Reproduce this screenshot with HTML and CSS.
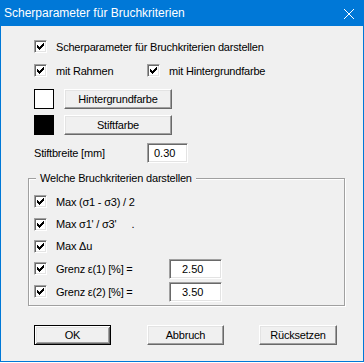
FILE: index.html
```html
<!DOCTYPE html>
<html>
<head>
<meta charset="utf-8">
<link rel="stylesheet" href="styles.css">
</head>
<body>
<div class="window">
  <div class="titlebar">
    <span class="title">Scherparameter für Bruchkriterien</span>
    <svg class="close" width="10" height="10" viewBox="0 0 10 10"><path d="M0 0L10 10M10 0L0 10" stroke="#fff" stroke-width="1"/></svg>
  </div>
  <div class="content">
    <div class="row r1">
      <span class="cb"><svg width="11" height="11" viewBox="0 0 11 11"><path d="M2 4h1v3H2zM3 5h1v3H3zM4 6h1v3H4zM5 5h1v3H5zM6 4h1v3H6zM7 3h1v3H7zM8 2h1v3H8z" fill="#000"/></svg></span>
      <span>Scherparameter für Bruchkriterien darstellen</span>
    </div>
    <div class="row r2">
      <div class="item first">
        <span class="cb"><svg width="11" height="11" viewBox="0 0 11 11"><path d="M2 4h1v3H2zM3 5h1v3H3zM4 6h1v3H4zM5 5h1v3H5zM6 4h1v3H6zM7 3h1v3H7zM8 2h1v3H8z" fill="#000"/></svg></span>
        <span>mit Rahmen</span>
      </div>
      <div class="item">
        <span class="cb"><svg width="11" height="11" viewBox="0 0 11 11"><path d="M2 4h1v3H2zM3 5h1v3H3zM4 6h1v3H4zM5 5h1v3H5zM6 4h1v3H6zM7 3h1v3H7zM8 2h1v3H8z" fill="#000"/></svg></span>
        <span>mit Hintergrundfarbe</span>
      </div>
    </div>
    <div class="row r3">
      <span class="swatch sw-white"></span>
      <span class="btn b-wide">Hintergrundfarbe</span>
    </div>
    <div class="row r4">
      <span class="swatch sw-black"></span>
      <span class="btn b-wide">Stiftfarbe</span>
    </div>
    <div class="row r5">
      <span class="lbl-stift">Stiftbreite [mm]</span>
      <span class="field f-stift">0.30</span>
    </div>

    <div class="group">
      <span class="legend">Welche Bruchkriterien darstellen</span>
      <div class="grow g1">
        <span class="cb"><svg width="11" height="11" viewBox="0 0 11 11"><path d="M2 4h1v3H2zM3 5h1v3H3zM4 6h1v3H4zM5 5h1v3H5zM6 4h1v3H6zM7 3h1v3H7zM8 2h1v3H8z" fill="#000"/></svg></span>
        <span>Max (σ1 - σ3) / 2</span>
      </div>
      <div class="grow g2">
        <span class="cb"><svg width="11" height="11" viewBox="0 0 11 11"><path d="M2 4h1v3H2zM3 5h1v3H3zM4 6h1v3H4zM5 5h1v3H5zM6 4h1v3H6zM7 3h1v3H7zM8 2h1v3H8z" fill="#000"/></svg></span>
        <span>Max σ1' / σ3'</span><span class="dot">.</span>
      </div>
      <div class="grow g3">
        <span class="cb"><svg width="11" height="11" viewBox="0 0 11 11"><path d="M2 4h1v3H2zM3 5h1v3H3zM4 6h1v3H4zM5 5h1v3H5zM6 4h1v3H6zM7 3h1v3H7zM8 2h1v3H8z" fill="#000"/></svg></span>
        <span>Max Δu</span>
      </div>
      <div class="grow g4">
        <span class="cb"><svg width="11" height="11" viewBox="0 0 11 11"><path d="M2 4h1v3H2zM3 5h1v3H3zM4 6h1v3H4zM5 5h1v3H5zM6 4h1v3H6zM7 3h1v3H7zM8 2h1v3H8z" fill="#000"/></svg></span>
        <span class="glbl">Grenz ε(1) [%] =</span>
        <span class="field f-grenz">2.50</span>
      </div>
      <div class="grow g5">
        <span class="cb"><svg width="11" height="11" viewBox="0 0 11 11"><path d="M2 4h1v3H2zM3 5h1v3H3zM4 6h1v3H4zM5 5h1v3H5zM6 4h1v3H6zM7 3h1v3H7zM8 2h1v3H8z" fill="#000"/></svg></span>
        <span class="glbl">Grenz ε(2) [%] =</span>
        <span class="field f-grenz">3.50</span>
      </div>
    </div>

    <div class="row buttons">
      <span class="btn b-ok">OK</span>
      <span class="btn b-abb">Abbruch</span>
      <span class="btn b-rs">Rücksetzen</span>
    </div>
  </div>
</div>
</body>
</html>
```

FILE: styles.css
```css
* { box-sizing: border-box; }

body {
  margin: 0;
  background: #ffffff;
  font-family: "Liberation Sans", Arial, sans-serif;
}

.window {
  width: 364px;
}

.titlebar {
  height: 26px;
  background: #0078d7;
  color: #ffffff;
  display: flex;
  align-items: center;
  padding-left: 4px;
  font-size: 12px;
}

.close {
  margin-left: auto;
  margin-right: 10px;
  align-self: flex-start;
  margin-top: 9px;
}

.content {
  height: 336px;
  background: #f0f0f0;
  border: 1px solid #0078d7;
  border-top: 0;
  padding-left: 27px;
  font-size: 11px;
  letter-spacing: -0.2px;
  color: #000000;
  display: flex;
  flex-direction: column;
  align-items: flex-start;
}

.row {
  display: flex;
  align-items: center;
  padding-left: 6px;
}

.r1 { margin-top: 14px; height: 13px; }
.r2 { margin-top: 11px; height: 13px; }
.r3 { margin-top: 12px; height: 20px; }
.r4 { margin-top: 6px; height: 20px; }
.r5 { margin-top: 8px; height: 20px; }

.item {
  display: flex;
  align-items: center;
}

.item.first { width: 113px; }

.cb {
  width: 13px;
  height: 13px;
  flex: none;
  background: #ffffff;
  border: 1px solid;
  border-color: #a0a0a0 #ffffff #ffffff #a0a0a0;
  box-shadow: inset 1px 1px 0 #696969, inset -1px -1px 0 #e3e3e3;
  margin-right: 9px;
  display: flex;
}

.cb svg { display: block; }

.swatch {
  width: 20px;
  height: 20px;
  margin-right: 10px;
  border: 1px solid #000000;
}

.sw-white { background: #ffffff; }
.sw-black { background: #000000; }

.btn {
  height: 20px;
  display: flex;
  align-items: center;
  justify-content: center;
  background: #f0f0f0;
  border: 1px solid;
  border-color: #ffffff #696969 #696969 #ffffff;
  box-shadow: inset -1px -1px 0 #a0a0a0, inset 1px 1px 0 #e3e3e3;
  padding-bottom: 1px;
}

.b-wide { width: 108px; }

.lbl-stift { width: 113px; }

.field {
  height: 20px;
  background: #ffffff;
  border: 1px solid;
  border-color: #a0a0a0 #ffffff #ffffff #a0a0a0;
  box-shadow: inset 1px 1px 0 #696969, inset -1px -1px 0 #e3e3e3;
  display: flex;
  align-items: center;
  letter-spacing: 0;
}

.f-stift { width: 41px; padding-left: 6px; }
.f-grenz { width: 53px; padding-left: 12px; }

.group {
  position: relative;
  margin-top: 15px;
  width: 317px;
  height: 128px;
  border: 1px solid #a0a0a0;
  box-shadow: inset 1px 1px 0 #ffffff, 1px 1px 0 #ffffff;
  padding-top: 11px;
}

.legend {
  position: absolute;
  top: -8px;
  left: 7px;
  line-height: 14px;
  padding: 0 4px 0 4px;
  background: #f0f0f0;
}

.grow {
  display: flex;
  align-items: center;
  padding-left: 5px;
}

.g1 { height: 23px; }
.g2 { height: 22px; }
.g3 { height: 22px; }
.g4 { height: 23px; }
.g5 { height: 23px; }

.glbl { width: 113px; }

.dot { margin-left: 15px; }

.buttons {
  margin-top: 19px;
  height: 20px;
}

.b-ok {
  width: 77px;
  border: 1px solid #000000;
  box-shadow: inset 1px 1px 0 #ffffff, inset -1px -1px 0 #696969, inset 2px 2px 0 #e3e3e3, inset -2px -2px 0 #a0a0a0;
}

.b-abb { width: 77px; margin-left: 36px; }
.b-rs { width: 78px; margin-left: 35px; }
```
